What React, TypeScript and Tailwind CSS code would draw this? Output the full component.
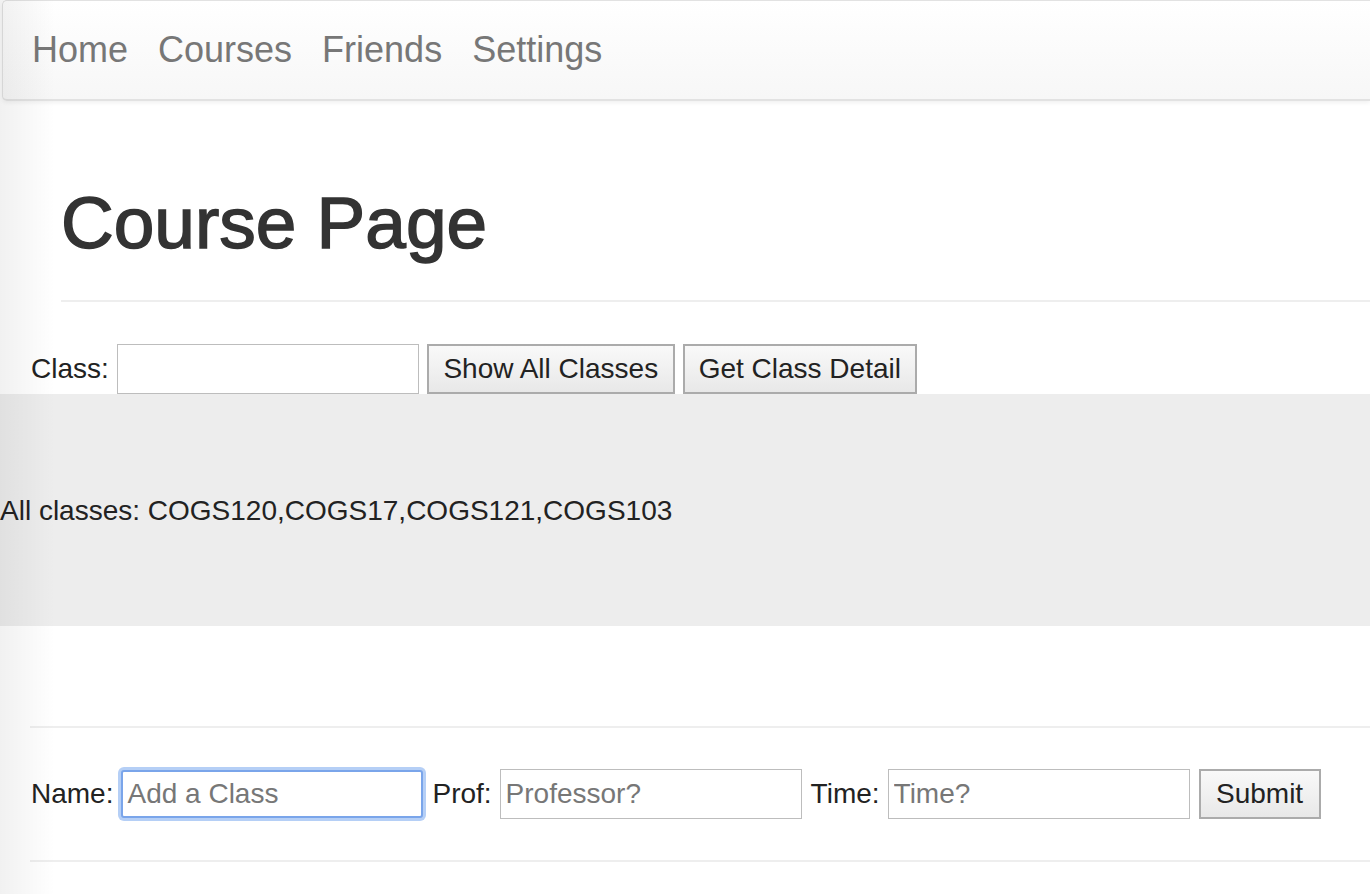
import React from "react";

export default function App() {
  const font = { fontFamily: '"Liberation Sans", Arial, Helvetica, sans-serif' };
  return (
    <div className="relative min-h-[894px] overflow-hidden bg-white text-[#333]" style={font}>
      <div className="pointer-events-none absolute inset-y-0 left-0 z-10 w-[55px] bg-gradient-to-r from-black/[0.055] to-transparent" />

      <nav className="ml-[2px] flex h-[101px] items-center gap-[30px] rounded-l-[5px] border-b-2 border-l border-t border-[#e2e2e2] bg-gradient-to-b from-white to-[#f7f7f7] pl-[29px] shadow-[0_2px_4px_rgba(0,0,0,0.06)]">
        <a className="text-[36px] text-[#777]">Home</a>
        <a className="text-[36px] text-[#777]">Courses</a>
        <a className="text-[36px] text-[#777]">Friends</a>
        <a className="text-[36px] text-[#777]">Settings</a>
      </nav>

      <div className="pl-[61px] pt-[82px]">
        <h1 className="text-[73px] leading-[80px] text-[#333] [-webkit-text-stroke-width:1.5px] [-webkit-text-stroke-color:#333]">
          Course Page
        </h1>
        <div className="mt-[37px] h-[2px] bg-[#eee]" />
      </div>

      <div className="mt-[41px] flex h-[51px] items-center pl-[31px] text-[28px] text-[#222]">
        <span>Class:</span>
        <input className="ml-[8px] h-[50px] w-[302px] border border-[#bdbdbd] bg-white px-2 text-[28px] outline-none" />
        <button className="ml-[8px] h-[50px] w-[248px] border-2 border-[#ababab] bg-gradient-to-b from-[#f9f9f9] to-[#e8e8e8] text-[28px] text-[#222]">
          Show All Classes
        </button>
        <button className="ml-[8px] h-[50px] w-[234px] border-2 border-[#ababab] bg-gradient-to-b from-[#f9f9f9] to-[#e8e8e8] text-[28px] text-[#222]">
          Get Class Detail
        </button>
      </div>

      <div className="flex h-[232px] items-center bg-[#ededed] text-[28px] text-[#222]">
        <span className="pt-[2px]">All classes: COGS120,COGS17,COGS121,COGS103</span>
      </div>

      <div className="ml-[30px] mt-[100px] h-[2px] bg-[#eee]" />

      <div className="mt-[41px] flex items-center pl-[31px] text-[28px] text-[#222]">
        <span>Name:</span>
        <input
          placeholder="Add a Class"
          className="ml-[8px] h-[48px] w-[302px] rounded-[3px] border-2 border-[#7aa5ea] bg-white px-[4px] text-[28px] shadow-[0_0_0_3px_#b5cff6] outline-none placeholder:text-[#777]"
        />
        <span className="ml-[9px]">Prof:</span>
        <input
          placeholder="Professor?"
          className="ml-[8px] h-[50px] w-[302px] border border-[#bdbdbd] bg-white px-[5px] text-[28px] outline-none placeholder:text-[#777]"
        />
        <span className="ml-[9px]">Time:</span>
        <input
          placeholder="Time?"
          className="ml-[8px] h-[50px] w-[302px] border border-[#bdbdbd] bg-white px-[5px] text-[28px] outline-none placeholder:text-[#777]"
        />
        <button className="ml-[9px] h-[50px] w-[122px] border-2 border-[#ababab] bg-gradient-to-b from-[#f9f9f9] to-[#e8e8e8] text-[28px] text-[#222]">
          Submit
        </button>
      </div>

      <div className="ml-[30px] mt-[41px] h-[2px] bg-[#eee]" />
    </div>
  );
}
